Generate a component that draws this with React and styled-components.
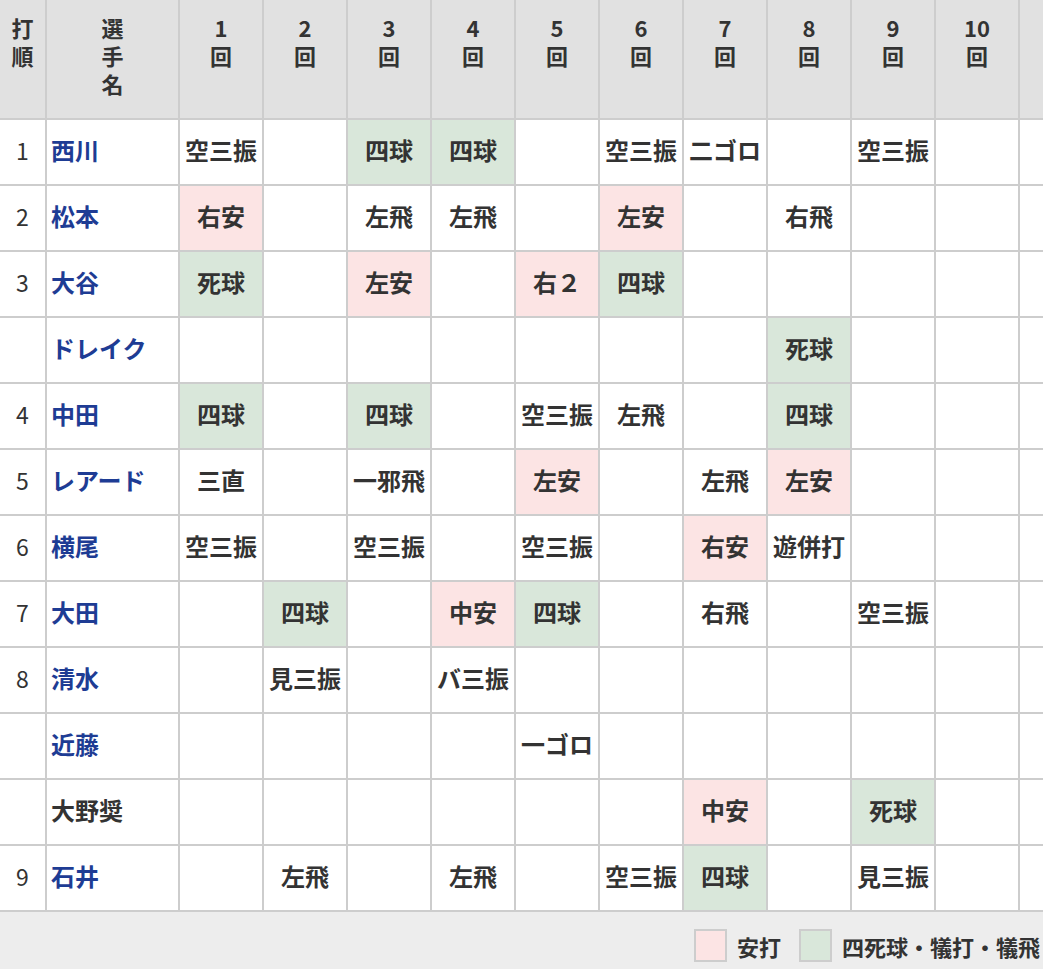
import React from 'react'
import styled, { createGlobalStyle } from 'styled-components'

const GlobalStyle = createGlobalStyle`
  html, body {
    margin: 0;
    padding: 0;
    overflow: hidden;
    background: #fff;
  }
  body {
    font-family: "Noto Sans CJK JP", "Noto Sans", sans-serif;
    color: #333;
  }
`

const Page = styled.div`
  width: 1043px;
  overflow: hidden;
`

const Board = styled.div`
  display: grid;
  grid-template-columns: 47px 133px repeat(11, 84px);
  grid-template-rows: 120px repeat(12, 66px);
  width: max-content;
`

const Cell = styled.div`
  box-sizing: border-box;
  border-right: 2px solid #cdcdcd;
  border-bottom: 2px solid #cdcdcd;
  display: flex;
  align-items: center;
  justify-content: center;
  padding-bottom: 4px;
  font-size: 24px;
  line-height: 1;
  font-weight: 700;
  color: #333;
  white-space: nowrap;
  background: ${({ $tone }) =>
    $tone === 'hit' ? '#fce4e4' : $tone === 'walk' ? '#d9e7da' : '#fff'};
`

const HeadCell = styled(Cell)`
  background: #e1e1e1;
  align-items: flex-start;
  padding: 13px 0 0;
  font-size: 22px;
  line-height: 28px;
`

const Stack = styled.div`
  display: flex;
  flex-direction: column;
  align-items: center;
`

const OrderCell = styled(Cell)`
  font-weight: 400;
  font-size: 23px;
`

const NameCell = styled(Cell)`
  justify-content: flex-start;
  padding-left: 4px;
  color: ${({ $linked }) => ($linked ? '#1e3c94' : '#333')};
`

const Legend = styled.div`
  background: #ededed;
  display: flex;
  justify-content: flex-end;
  align-items: center;
  gap: 18px;
  padding: 17px 3px 20px 0;
`

const LegendItem = styled.div`
  display: flex;
  align-items: center;
  gap: 10px;
  font-size: 22px;
  font-weight: 700;
  color: #333;
`

const Swatch = styled.span`
  box-sizing: border-box;
  width: 33px;
  height: 33px;
  border: 2px solid #cdcdcd;
  background: ${({ $tone }) => ($tone === 'hit' ? '#fce4e4' : '#d9e7da')};
`

const H = 'hit'
const W = 'walk'

// each result: [inning, text, tone]
const lineup = [
  { no: '1', name: '西川', linked: true, res: [[1, '空三振'], [3, '四球', W], [4, '四球', W], [6, '空三振'], [7, '二ゴロ'], [9, '空三振']] },
  { no: '2', name: '松本', linked: true, res: [[1, '右安', H], [3, '左飛'], [4, '左飛'], [6, '左安', H], [8, '右飛']] },
  { no: '3', name: '大谷', linked: true, res: [[1, '死球', W], [3, '左安', H], [5, '右２', H], [6, '四球', W]] },
  { no: '', name: 'ドレイク', linked: true, res: [[8, '死球', W]] },
  { no: '4', name: '中田', linked: true, res: [[1, '四球', W], [3, '四球', W], [5, '空三振'], [6, '左飛'], [8, '四球', W]] },
  { no: '5', name: 'レアード', linked: true, res: [[1, '三直'], [3, '一邪飛'], [5, '左安', H], [7, '左飛'], [8, '左安', H]] },
  { no: '6', name: '横尾', linked: true, res: [[1, '空三振'], [3, '空三振'], [5, '空三振'], [7, '右安', H], [8, '遊併打']] },
  { no: '7', name: '大田', linked: true, res: [[2, '四球', W], [4, '中安', H], [5, '四球', W], [7, '右飛'], [9, '空三振']] },
  { no: '8', name: '清水', linked: true, res: [[2, '見三振'], [4, 'バ三振']] },
  { no: '', name: '近藤', linked: true, res: [[5, '一ゴロ']] },
  { no: '', name: '大野奨', linked: false, res: [[7, '中安', H], [9, '死球', W]] },
  { no: '9', name: '石井', linked: true, res: [[2, '左飛'], [4, '左飛'], [6, '空三振'], [7, '四球', W], [9, '見三振']] },
]

const innings = Array.from({ length: 10 }, (_, i) => i + 1)
// the table runs on past the window; the next column shows only as an edge
const cols = [...innings, 0]

const App = () => (
  <Page>
    <GlobalStyle />
    <Board>
      <HeadCell>
        <Stack><span>打</span><span>順</span></Stack>
      </HeadCell>
      <HeadCell>
        <Stack><span>選</span><span>手</span><span>名</span></Stack>
      </HeadCell>
      {cols.map(n => (
        <HeadCell key={'h' + n}>
          {n > 0 && <Stack><span>{n}</span><span>回</span></Stack>}
        </HeadCell>
      ))}
      {lineup.map((p, r) => (
        <React.Fragment key={p.name}>
          <OrderCell>{p.no}</OrderCell>
          <NameCell $linked={p.linked}>{p.name}</NameCell>
          {cols.map(n => {
            const hit = p.res.find(x => x[0] === n)
            return (
              <Cell key={r + '-' + n} $tone={hit && hit[2]}>
                {hit ? hit[1] : ''}
              </Cell>
            )
          })}
        </React.Fragment>
      ))}
    </Board>
    <Legend>
      <LegendItem><Swatch $tone="hit" />安打</LegendItem>
      <LegendItem><Swatch $tone="walk" />四死球・犠打・犠飛</LegendItem>
    </Legend>
  </Page>
)

export default App
